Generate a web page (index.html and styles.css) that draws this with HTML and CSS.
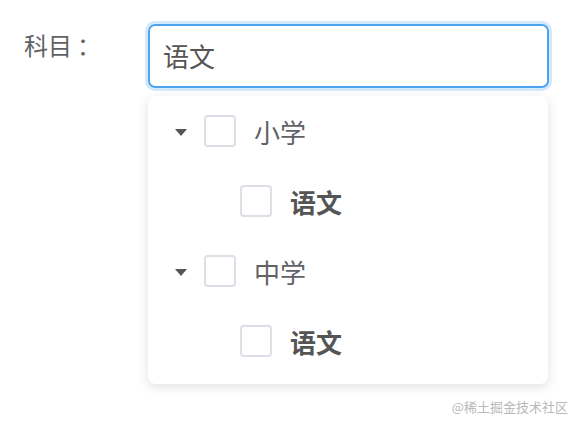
FILE: index.html
```html
<!DOCTYPE html>
<html lang="zh-CN">
<head>
<meta charset="utf-8">
<title>科目</title>
<link rel="stylesheet" href="styles.css">
</head>
<body>
<div class="page">
  <div class="form-row">
    <label class="label">科目<span class="colon">：</span></label>
    <div class="field">
      <div class="input">语文</div>
      <div class="dropdown">
        <div class="node">
          <span class="caret"></span>
          <span class="checkbox"></span>
          <span class="node-text">小学</span>
        </div>
        <div class="node child">
          <span class="checkbox"></span>
          <span class="node-text bold">语文</span>
        </div>
        <div class="node">
          <span class="caret"></span>
          <span class="checkbox"></span>
          <span class="node-text">中学</span>
        </div>
        <div class="node child">
          <span class="checkbox"></span>
          <span class="node-text bold">语文</span>
        </div>
      </div>
    </div>
  </div>
  <div class="watermark">@稀土掘金技术社区</div>
</div>
</body>
</html>
```
FILE: styles.css
```css
* { box-sizing: border-box; }
html, body { margin: 0; padding: 0; background: #ffffff; }
body {
  font-family: "Noto Sans CJK SC", "Noto Sans", sans-serif;
  color: #606266;
}
.page { width: 580px; height: 426px; overflow: hidden; }
.form-row {
  display: flex;
  padding: 24px 0 0 24px;
}
.label {
  width: 124px;
  font-size: 24px;
  line-height: 42px;
  color: #606266;
}
.colon {
  font-family: "Noto Sans CJK TC", "Noto Sans CJK SC", sans-serif;
  margin-left: 5px;
}
.field { width: 401px; }
.input {
  height: 64px;
  border: 2px solid #4ea3ef;
  border-radius: 7px;
  box-shadow: 0 0 0 3px #d6e8fc;
  padding-left: 13px;
  font-size: 26px;
  line-height: 60px;
  color: #555;
}
.dropdown {
  margin-top: 8px;
  width: 400px;
  padding-bottom: 8px;
  background: #fff;
  border-radius: 8px;
  box-shadow: 0 3px 12px rgba(0,0,0,0.12);
}
.node {
  display: flex;
  align-items: center;
  height: 70px;
  padding-left: 27px;
}
.node.child { padding-left: 92px; }
.caret {
  width: 0; height: 0;
  border-left: 6px solid transparent;
  border-right: 6px solid transparent;
  border-top: 7px solid #555;
  margin-right: 17px;
  margin-top: 2px;
}
.checkbox {
  width: 32px; height: 32px;
  border: 2px solid #dcdfe6;
  border-radius: 4px;
  background: #fff;
  margin-right: 18px;
}
.node-text {
  font-size: 26px;
  line-height: 32px;
  padding-top: 2px;
  color: #606266;
}
.node-text.bold { font-weight: 600; color: #555; }
.watermark {
  margin-top: 15px;
  padding-right: 12px;
  text-align: right;
  font-size: 13px;
  line-height: 16px;
  color: #b8b8b8;
}
```
